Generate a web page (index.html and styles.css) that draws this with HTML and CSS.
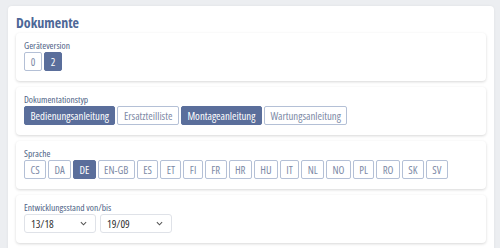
FILE: index.html
```html
<!DOCTYPE html>
<html lang="de">
<head>
<meta charset="utf-8">
<link rel="stylesheet" href="styles.css">
</head>
<body>
<div class="panel">
  <h2 class="title">Dokumente</h2>
  <div class="card">
    <div class="label">Geräteversion</div>
    <div class="btns vers">
      <span class="btn">0</span><span class="btn active">2</span>
    </div>
  </div>
  <div class="card">
    <div class="label">Dokumentationstyp</div>
    <div class="btns">
      <span class="btn active">Bedienungsanleitung</span><span class="btn">Ersatzteilliste</span><span class="btn active">Montageanleitung</span><span class="btn">Wartungsanleitung</span>
    </div>
  </div>
  <div class="card">
    <div class="label">Sprache</div>
    <div class="btns langs">
      <span class="btn">CS</span><span class="btn">DA</span><span class="btn active">DE</span><span class="btn">EN-GB</span><span class="btn">ES</span><span class="btn">ET</span><span class="btn">FI</span><span class="btn">FR</span><span class="btn">HR</span><span class="btn">HU</span><span class="btn">IT</span><span class="btn">NL</span><span class="btn">NO</span><span class="btn">PL</span><span class="btn">RO</span><span class="btn">SK</span><span class="btn">SV</span>
    </div>
  </div>
  <div class="card">
    <div class="label">Entwicklungsstand von/bis</div>
    <div class="selects">
      <div class="select"><span>13/18</span><svg class="chev" viewBox="0 0 8 5" width="7" height="5"><path d="M1 1 L4 4 L7 1" fill="none" stroke="#555" stroke-width="1.2"/></svg></div>
      <div class="select"><span>19/09</span><svg class="chev" viewBox="0 0 8 5" width="7" height="5"><path d="M1 1 L4 4 L7 1" fill="none" stroke="#555" stroke-width="1.2"/></svg></div>
    </div>
  </div>
</div>
</body>
</html>
```
FILE: styles.css
```css
html, body { margin: 0; padding: 0; }
body {
  background: #eceef1;
  font-family: "Open Sans", sans-serif;
  font-stretch: 75%;
  width: 500px;
  height: 248px;
  overflow: hidden;
}
.panel {
  margin: 6px 6px 0 8px;
  background: #fff;
  border-radius: 4px;
  padding: 6px 8px 20px 8px;
  box-shadow: 0 0 3px rgba(0,0,0,0.06);
}
.title {
  margin: 0;
  font-size: 14px;
  line-height: 21px;
  font-weight: 700;
  color: #4d6797;
  height: 21px;
}
.card {
  background: #fff;
  border-radius: 4px;
  box-shadow: 0 1px 3px rgba(0,0,0,0.16);
  padding: 7px 8px 10px 8px;
  margin-bottom: 6px;
}
.label {
  font-size: 9.5px;
  line-height: 11px;
  color: #4e5f86;
  margin-bottom: 1px;
}
.btns {
  display: flex;
  gap: 2px;
}
.btn {
  box-sizing: border-box;
  height: 19px;
  line-height: 17px;
  border: 1px solid #b4c0d6;
  border-radius: 2px;
  padding: 0 5.5px;
  font-size: 10.8px;
  color: #7d8aa6;
  background: #fff;
}
.vers .btn {
  width: 18px;
  padding: 0;
  text-align: center;
}
.langs .btn {
  padding: 0 5.4px;
}
.btn.active {
  background: #5a6e9b;
  border-color: #5a6e9b;
  color: #fff;
}
.selects {
  display: flex;
  gap: 4px;
}
.select {
  box-sizing: border-box;
  width: 72px;
  height: 19px;
  border: 1px solid #dfe2e8;
  border-radius: 3px;
  display: flex;
  align-items: center;
  justify-content: space-between;
  padding: 0 8px 0 6px;
  font-size: 11px;
  color: #333;
}
.chev { display: block; }
```
